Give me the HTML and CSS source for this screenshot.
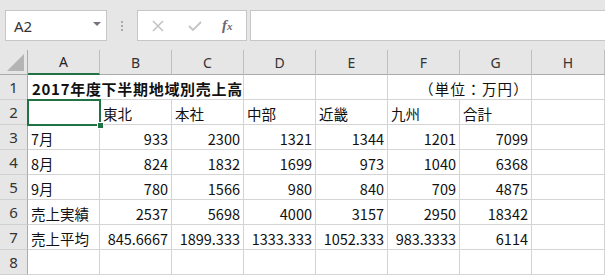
FILE: index.html
```html
<!DOCTYPE html>
<html lang="ja">
<head>
<meta charset="UTF-8">
<title>2017年度下半期地域別売上高</title>
<link rel="stylesheet" href="styles.css">
</head>
<body>
<div class="app">
  <!-- Formula Bar -->
  <div class="formula-bar">
    <div class="name-box">
      <span>A2</span>
      <span class="name-arrow"></span>
    </div>
    <div class="grip">
      <span></span><span></span><span></span>
    </div>
    <div class="fx-buttons">
      <svg class="fx-btn" width="14" height="14" viewBox="0 0 14 14"><path d="M2 2 L12 12 M12 2 L2 12" stroke="#c4c4c4" stroke-width="1.6" fill="none"/></svg>
      <svg class="fx-btn" width="16" height="14" viewBox="0 0 16 14"><path d="M2 7 L6 11 L14 3" stroke="#c4c4c4" stroke-width="1.8" fill="none"/></svg>
      <span class="fx-label"><i>f</i><small>x</small></span>
    </div>
    <div class="formula-input"></div>
  </div>

  <!-- Sheet Grid -->
  <div class="sheet">
    <div class="corner"><span class="corner-tri"></span></div>
    <div class="col-head selected">A</div>
    <div class="col-head">B</div>
    <div class="col-head">C</div>
    <div class="col-head">D</div>
    <div class="col-head">E</div>
    <div class="col-head">F</div>
    <div class="col-head">G</div>
    <div class="col-head">H</div>

    <div class="row-head">1</div>
    <div class="cell title span3">2017年度下半期地域別売上高</div>
    <div class="cell"></div>
    <div class="cell"></div>
    <div class="cell num unit span2">（単位：万円）</div>
    <div class="cell"></div>

    <div class="row-head">2</div>
    <div class="cell active"></div>
    <div class="cell">東北</div>
    <div class="cell">本社</div>
    <div class="cell">中部</div>
    <div class="cell">近畿</div>
    <div class="cell">九州</div>
    <div class="cell">合計</div>
    <div class="cell"></div>

    <div class="row-head">3</div>
    <div class="cell">7月</div>
    <div class="cell num">933</div>
    <div class="cell num">2300</div>
    <div class="cell num">1321</div>
    <div class="cell num">1344</div>
    <div class="cell num">1201</div>
    <div class="cell num">7099</div>
    <div class="cell"></div>

    <div class="row-head">4</div>
    <div class="cell">8月</div>
    <div class="cell num">824</div>
    <div class="cell num">1832</div>
    <div class="cell num">1699</div>
    <div class="cell num">973</div>
    <div class="cell num">1040</div>
    <div class="cell num">6368</div>
    <div class="cell"></div>

    <div class="row-head">5</div>
    <div class="cell">9月</div>
    <div class="cell num">780</div>
    <div class="cell num">1566</div>
    <div class="cell num">980</div>
    <div class="cell num">840</div>
    <div class="cell num">709</div>
    <div class="cell num">4875</div>
    <div class="cell"></div>

    <div class="row-head">6</div>
    <div class="cell">売上実績</div>
    <div class="cell num">2537</div>
    <div class="cell num">5698</div>
    <div class="cell num">4000</div>
    <div class="cell num">3157</div>
    <div class="cell num">2950</div>
    <div class="cell num">18342</div>
    <div class="cell"></div>

    <div class="row-head">7</div>
    <div class="cell">売上平均</div>
    <div class="cell num">845.6667</div>
    <div class="cell num">1899.333</div>
    <div class="cell num">1333.333</div>
    <div class="cell num">1052.333</div>
    <div class="cell num">983.3333</div>
    <div class="cell num">6114</div>
    <div class="cell"></div>

    <div class="row-head">8</div>
    <div class="cell"></div>
    <div class="cell"></div>
    <div class="cell"></div>
    <div class="cell"></div>
    <div class="cell"></div>
    <div class="cell"></div>
    <div class="cell"></div>
    <div class="cell"></div>
  </div>
</div>
</body>
</html>
```

FILE: styles.css
```css
body {
    margin: 0;
    padding: 0;
    background-color: #ffffff;
    font-family: 'Noto Sans CJK JP', 'Noto Sans', sans-serif;
    overflow: hidden;
}

.app {
    width: 605px;
    height: 277px;
    overflow: hidden;
}

/* Formula Bar */
.formula-bar {
    display: flex;
    align-items: flex-start;
    height: 50px;
    padding-top: 10px;
    box-sizing: border-box;
    background-color: #e6e6e6;
}

.name-box {
    display: flex;
    align-items: center;
    justify-content: space-between;
    width: 102px;
    height: 31px;
    margin-left: 5px;
    padding: 0 5px 0 8px;
    box-sizing: border-box;
    background-color: #fff;
    border: 1px solid #c6c6c6;
    font-family: 'Noto Sans', sans-serif;
    font-size: 15px;
    color: #333;
}

.name-arrow {
    width: 0;
    height: 0;
    border-left: 4px solid transparent;
    border-right: 4px solid transparent;
    border-top: 4px solid #7a6f80;
    margin-bottom: 3px;
}

.grip {
    display: flex;
    flex-direction: column;
    gap: 2px;
    width: 30px;
    height: 31px;
    align-items: center;
    justify-content: center;
}

.grip span {
    width: 2px;
    height: 2px;
    background-color: #a9a9a9;
}

.fx-buttons {
    display: flex;
    align-items: center;
    width: 110px;
    height: 31px;
    box-sizing: border-box;
    background-color: #fff;
    border: 1px solid #c6c6c6;
    padding-left: 13px;
}

.fx-btn {
    margin-right: 22px;
}

.fx-btn + .fx-btn {
    margin-right: 19px;
}

.fx-label {
    font-family: 'Liberation Serif', serif;
    font-size: 15px;
    color: #6e6672;
    font-weight: bold;
}

.fx-label small {
    font-size: 11px;
    font-style: italic;
}

.formula-input {
    flex: 1;
    height: 31px;
    margin-left: 3px;
    box-sizing: border-box;
    background-color: #fff;
    border: 1px solid #c6c6c6;
    border-right: none;
}

/* Sheet Grid */
.sheet {
    display: grid;
    grid-template-columns: 28px repeat(7, 72px) 1fr;
    grid-template-rows: repeat(9, 25px);
}

.corner {
    position: relative;
    background-color: #e6e6e6;
    border-right: 1px solid #ababab;
    border-bottom: 1px solid #ababab;
    box-sizing: border-box;
}

.corner-tri {
    position: absolute;
    right: 3px;
    bottom: 3px;
    width: 0;
    height: 0;
    border-left: 17px solid transparent;
    border-bottom: 17px solid #b4b4b4;
}

.col-head {
    display: flex;
    align-items: center;
    justify-content: center;
    background-color: #e6e6e6;
    border-right: 1px solid #bfbfbf;
    border-bottom: 1px solid #ababab;
    box-sizing: border-box;
    font-family: 'Noto Sans', sans-serif;
    font-size: 14px;
    color: #333;
}

.col-head.selected {
    border-bottom: 2px solid #217346;
    color: #222;
}

.row-head {
    display: flex;
    align-items: center;
    justify-content: center;
    background-color: #e6e6e6;
    border-right: 1px solid #ababab;
    border-bottom: 1px solid #d0d0d0;
    box-sizing: border-box;
    font-family: 'Noto Sans', sans-serif;
    font-size: 15px;
    color: #333;
}

.cell {
    display: flex;
    align-items: center;
    padding: 2px 3px 0 3px;
    border-right: 1px solid #d4d4d4;
    border-bottom: 1px solid #d4d4d4;
    box-sizing: border-box;
    font-size: 14.5px;
    color: #111;
    white-space: nowrap;
    overflow: visible;
}

.cell.num {
    justify-content: flex-end;
}

.cell.title {
    font-weight: bold;
    font-size: 15px;
    letter-spacing: 0.7px;
    padding-left: 4px;
}

.span3 {
    grid-column: span 3;
}

.span2 {
    grid-column: span 2;
}

.cell.unit {
    padding-right: 2px;
    letter-spacing: 1.2px;
}

/* Active cell A2 */
.cell.active {
    position: relative;
}

.cell.active::after {
    content: '';
    position: absolute;
    left: -1px;
    top: -1px;
    right: -2px;
    bottom: -2px;
    border: 2px solid #217346;
}

.cell.active::before {
    content: '';
    position: absolute;
    right: -5px;
    bottom: -5px;
    width: 5px;
    height: 5px;
    background-color: #217346;
    border: 1px solid #fff;
    z-index: 2;
}
```
